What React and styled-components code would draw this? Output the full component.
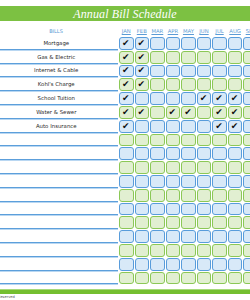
import React from 'react';
import styled, { createGlobalStyle } from 'styled-components';

const GlobalStyle = createGlobalStyle`
  html, body { margin: 0; padding: 0; background: #fff; width: 250px; height: 300px; overflow: hidden; }
  #root { width: 250px; height: 300px; overflow: hidden; }
`;

const Page = styled.div`
  display: flex;
  flex-direction: column;
  width: 250px;
  height: 300px;
  overflow: hidden;
  font-family: "DejaVu Sans", "Liberation Sans", sans-serif;
`;

const TitleBar = styled.div`
  margin-top: 6px;
  height: 15px;
  background: #7cc142;
  display: flex;
  align-items: center;
  justify-content: center;
  flex-shrink: 0;
`;

const Title = styled.h1`
  margin: 0;
  font: italic 12px/1 "Liberation Serif", serif;
  color: #fff;
  letter-spacing: 0.1px;
`;

const HeaderRow = styled.div`
  display: flex;
  height: 16px;
  align-items: flex-end;
  padding-bottom: 2px;
  box-sizing: border-box;
  flex-shrink: 0;
`;

const BillsHead = styled.div`
  width: 112px;
  margin-right: 7px;
  text-align: center;
  font-size: 5px;
  line-height: 7px;
  color: #5b9bd5;
  flex-shrink: 0;
`;

const MonthHead = styled.div`
  width: 14.5px;
  margin-right: 1.05px;
  flex-shrink: 0;
  text-align: center;
  font-size: 5.3px;
  line-height: 7px;
  color: #5b9bd5;
  text-decoration: underline;
  white-space: nowrap;
`;

const Row = styled.div`
  display: flex;
  height: 12.8px;
  margin-bottom: 1px;
  flex-shrink: 0;
`;

const Label = styled.div`
  width: 117.5px;
  margin-right: 1.5px;
  height: 12.8px;
  box-sizing: border-box;
  padding-right: 5px;
  border-bottom: 1.5px solid #5c9fdb;
  box-shadow: 0 1px 0 #b9d7f2;
  flex-shrink: 0;
  display: flex;
  align-items: flex-end;
  justify-content: center;
  padding-bottom: 2px;
  font-size: 5.4px;
  line-height: 7px;
  color: #2b2b2b;
  white-space: nowrap;
`;

const Cell = styled.div`
  width: 14.5px;
  height: 12.8px;
  margin-right: 1.05px;
  flex-shrink: 0;
  box-sizing: border-box;
  border-radius: 3px;
  border: 1.7px solid ${p => (p.$tone === 'green' ? '#8bc856' : '#589cdb')};
  background: ${p => (p.$tone === 'green' ? '#e1efd1' : '#d8e9f8')};
  display: flex;
  align-items: center;
  justify-content: center;
  padding-right: 1px;
  font-size: 9px;
  line-height: 1;
  color: #111;
`;

const FooterBar = styled.div`
  margin-top: 3.6px;
  height: 4px;
  background: #74bf30;
  border-top: 0.5px solid #a6d97a;
  flex-shrink: 0;
`;

const FooterText = styled.div`
  margin-top: 1px;
  margin-left: -20px;
  font-size: 3.6px;
  line-height: 5px;
  color: #555;
  white-space: nowrap;
`;

const months = ['JAN', 'FEB', 'MAR', 'APR', 'MAY', 'JUN', 'JUL', 'AUG', 'SEP', 'OCT', 'NOV', 'DEC'];

const bills = [
  { name: 'Mortgage', paid: [0, 1] },
  { name: 'Gas & Electric', paid: [0, 1] },
  { name: 'Internet & Cable', paid: [0, 1] },
  { name: "Kohl's Charge", paid: [0, 1] },
  { name: 'School Tuition', paid: [0, 5, 6, 7] },
  { name: 'Water & Sewer', paid: [0, 1, 3, 4, 6, 7] },
  { name: 'Auto Insurance', paid: [0, 6, 7] },
];

const rows = Array.from({ length: 18 }, (_, i) => bills[i] || { name: '', paid: [] });

export default function App() {
  return (
    <>
      <GlobalStyle />
      <Page>
        <TitleBar>
          <Title>Annual Bill Schedule</Title>
        </TitleBar>
        <HeaderRow>
          <BillsHead>BILLS</BillsHead>
          {months.map(m => (
            <MonthHead key={m}>{m}</MonthHead>
          ))}
        </HeaderRow>
        {rows.map((r, i) => (
          <Row key={i}>
            <Label>{r.name}</Label>
            {months.map((m, j) => (
              <Cell key={m} $tone={i % 2 ? 'green' : 'blue'}>
                {r.paid.includes(j) ? '✔' : ''}
              </Cell>
            ))}
          </Row>
        ))}
        <FooterBar />
        <FooterText>All Rights Reserved</FooterText>
      </Page>
    </>
  );
}
